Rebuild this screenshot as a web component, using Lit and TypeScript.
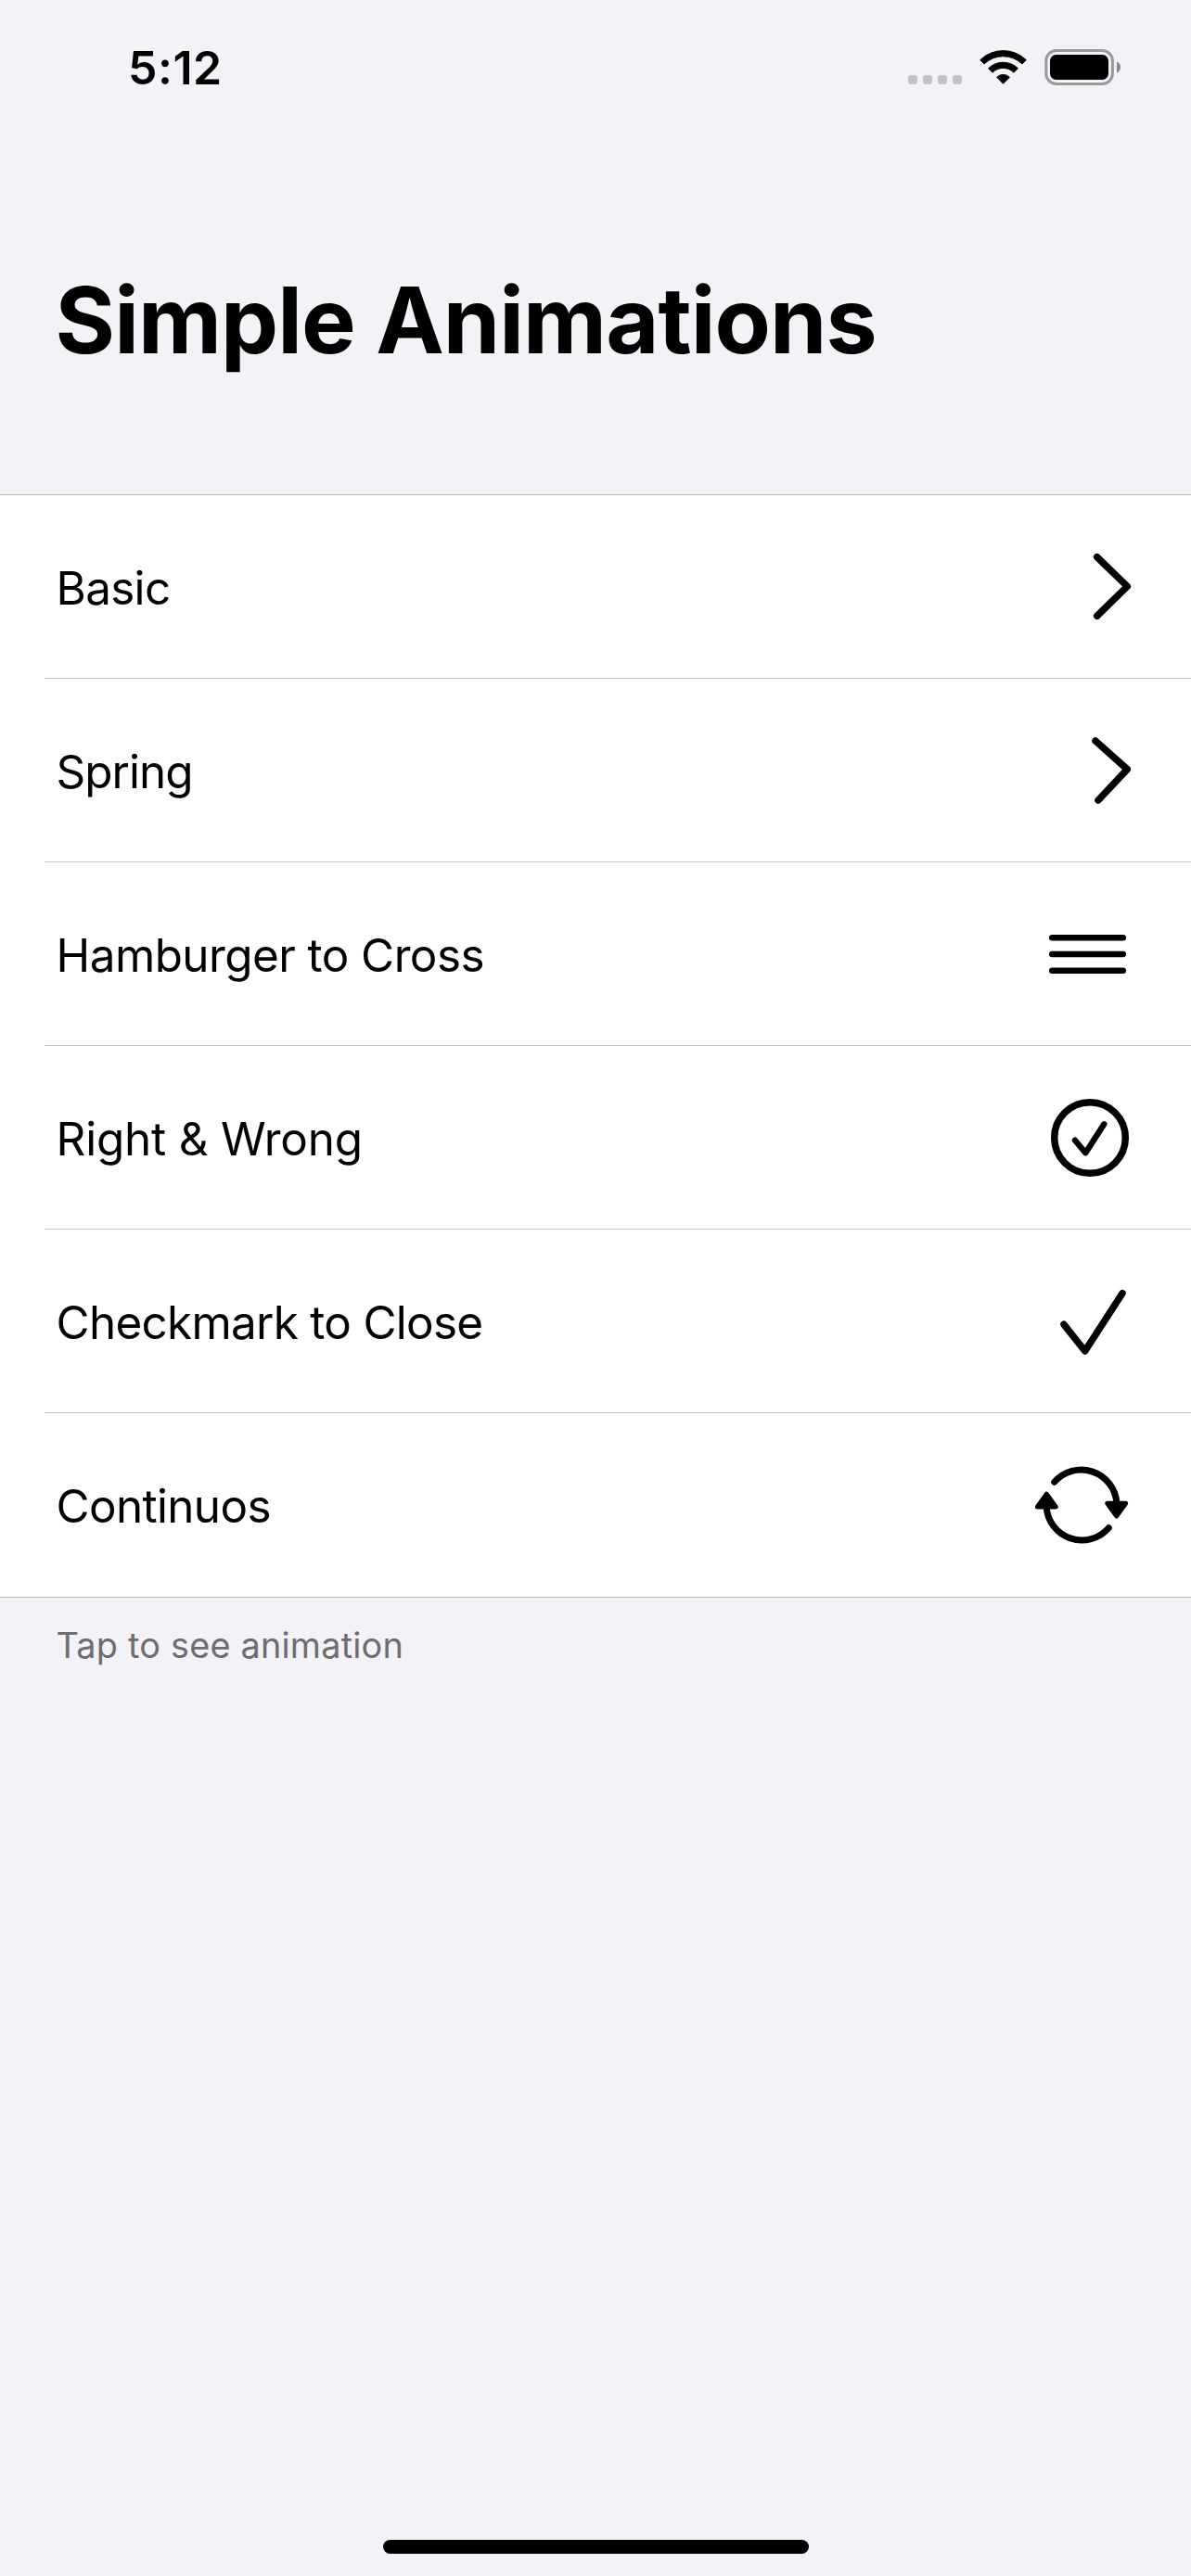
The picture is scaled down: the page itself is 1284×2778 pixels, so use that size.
import { LitElement, html, css, svg, type SVGTemplateResult } from "lit";
import { customElement, property } from "lit/decorators.js";

const FONT = css`Inter, "Liberation Sans", sans-serif`;

@customElement("status-bar")
class StatusBar extends LitElement {
  @property() time = "";

  static styles = css`
    :host {
      display: flex;
      align-items: flex-start;
      justify-content: space-between;
      box-sizing: border-box;
      height: 141px;
      padding: 43px 76px 0 138px;
      font-family: ${FONT};
    }
    .time {
      font-size: 50px;
      font-weight: 600;
      line-height: 60px;
      letter-spacing: 0.5px;
    }
    .indicators {
      display: block;
      width: 232px;
      height: 50px;
      margin-top: 5px;
    }
  `;

  render() {
    return html`
      <span class="time">${this.time}</span>
      <svg class="indicators" viewBox="976 48 232 50">
        <g fill="#c4c3c8">
          <rect x="979" y="81" width="10" height="10" rx="3.2" />
          <rect x="995" y="81" width="10" height="10" rx="3.2" />
          <rect x="1011" y="81" width="10" height="10" rx="3.2" />
          <rect x="1027" y="81" width="10" height="10" rx="3.2" />
        </g>
        <g fill="#000" stroke="#000" stroke-width="1" stroke-linejoin="round">
          <path d="M1056.8 64.6A35.5 35.5 0 0 1 1106.2 64.6L1102 69A29.5 29.5 0 0 0 1061 69Z" />
          <path d="M1065.6 73.7A22.8 22.8 0 0 1 1097.4 73.7L1093 78.2A16.2 16.2 0 0 0 1070 78.2Z" />
          <path d="M1074.6 83.2A10 10 0 0 1 1088.4 83.2L1081.5 90.2Z" />
        </g>
        <rect x="1127.8" y="54.5" width="71.6" height="36" rx="11" fill="none" stroke="#99989c" stroke-width="3" />
        <rect x="1132" y="59" width="63" height="27" rx="6.5" fill="#000" />
        <path d="M1204 66.6C1206.6 67.7 1208 70 1208 72.6S1206.6 77.6 1204 78.7Z" fill="#8a898d" />
      </svg>
    `;
  }
}

@customElement("list-row")
class ListRow extends LitElement {
  @property() label = "";
  @property({ type: Number }) tracking = 0;
  @property({ attribute: false }) icon?: SVGTemplateResult;

  static styles = css`
    :host {
      display: block;
      padding-left: 48px;
      background: #fff;
      font-family: ${FONT};
    }
    .row {
      display: flex;
      align-items: center;
      justify-content: space-between;
      box-sizing: border-box;
      height: 198px;
      padding: 0 60px 0 12.6px;
      border-bottom: 1px solid #c6c6c8;
    }
    :host(:last-of-type) .row {
      border-bottom-color: transparent;
    }
    .label {
      padding-top: 3px;
      font-size: 49.4px;
      line-height: 60px;
      white-space: nowrap;
    }
    .icon {
      display: block;
      width: 120px;
      height: 120px;
      margin-top: 1px;
      overflow: visible;
      fill: none;
      stroke: #000;
      stroke-width: 7.5px;
      stroke-linecap: round;
      stroke-linejoin: round;
    }
    .thin {
      stroke-width: 6.4px;
    }
    .arc {
      stroke-width: 7px;
    }
    .head {
      fill: #000;
      stroke-width: 5px;
    }
  `;

  render() {
    return html`
      <div class="row">
        <span class="label" style="letter-spacing:${this.tracking}px">${this.label}</span>
        <svg class="icon" viewBox="0 0 120 120">${this.icon}</svg>
      </div>
    `;
  }
}

const rows: { label: string; tracking: number; icon: SVGTemplateResult }[] = [
  { label: "Basic", tracking: -0.7, icon: svg`<path d="M78.7 27.7L111.3 59.4L78.7 91.3" />` },
  { label: "Spring", tracking: -0.95, icon: svg`<path d="M77 28L111.3 58.6L80 92" />` },
  {
    label: "Hamburger to Cross",
    tracking: -0.55,
    icon: svg`<path class="thin" d="M30.2 42.2H106.8M30.2 60H106.8M30.2 77.8H106.8" />`,
  },
  {
    label: "Right & Wrong",
    tracking: -0.2,
    icon: svg`<circle cx="71" cy="60" r="38.3" /><path class="thin" d="M55 62.7L66.3 76.2L86.3 45.3" />`,
  },
  { label: "Checkmark to Close", tracking: -0.7, icon: svg`<path d="M43 63.3L65.7 92L106 29.7" />` },
  {
    label: "Continuos",
    tracking: -0.65,
    icon: svg`
      <path class="arc" d="M32.7 35.3A38.3 38.3 0 0 1 99.9 58" />
      <path class="arc" d="M91.3 84.7A38.3 38.3 0 0 1 24.1 62" />
      <path class="head" d="M89.8 58.2H109.6L99.7 72Z" />
      <path class="head" d="M34.2 62H14.4L24.3 48.2Z" />
    `,
  },
];

@customElement("app-root")
class AppRoot extends LitElement {
  static styles = css`
    :host {
      display: flex;
      flex-direction: column;
      box-sizing: border-box;
      width: 1284px;
      height: 2778px;
      background: #f2f2f7;
      color: #000;
      font-family: ${FONT};
    }
    .title {
      box-sizing: border-box;
      height: 392px;
      margin: 0;
      padding: 144px 60px 0 59.5px;
      font-size: 98.6px;
      font-weight: 700;
      line-height: 120px;
      letter-spacing: -0.93px;
      white-space: nowrap;
    }
    .list {
      border-top: 1px solid #bcbbc0;
      border-bottom: 1px solid #bcbbc0;
      background: #fff;
    }
    .footer {
      margin: 0;
      padding: 28px 60px 0 60.5px;
      color: #6d6c71;
      font-size: 37.8px;
      line-height: 46px;
      letter-spacing: 0.22px;
    }
    .home {
      width: 459px;
      height: 15px;
      margin: auto 0 24px 413px;
      border-radius: 8px;
      background: #000;
    }
  `;

  render() {
    return html`
      <status-bar time="5:12"></status-bar>
      <h1 class="title">Simple Animations</h1>
      <div class="list">
        ${rows.map(
          (r) => html`<list-row .label=${r.label} .tracking=${r.tracking} .icon=${r.icon}></list-row>`,
        )}
      </div>
      <p class="footer">Tap to see animation</p>
      <div class="home"></div>
    `;
  }
}
